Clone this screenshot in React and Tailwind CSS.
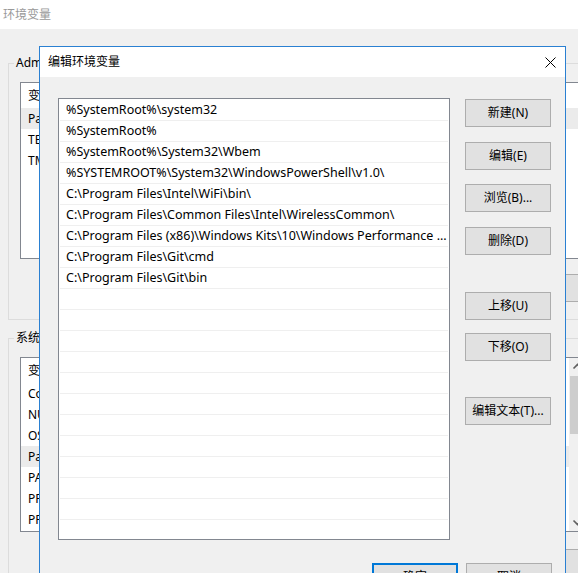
import React from "react";

const pathEntries = [
  "%SystemRoot%\\system32",
  "%SystemRoot%",
  "%SystemRoot%\\System32\\Wbem",
  "%SYSTEMROOT%\\System32\\WindowsPowerShell\\v1.0\\",
  "C:\\Program Files\\Intel\\WiFi\\bin\\",
  "C:\\Program Files\\Common Files\\Intel\\WirelessCommon\\",
  "C:\\Program Files (x86)\\Windows Kits\\10\\Windows Performance ...",
  "C:\\Program Files\\Git\\cmd",
  "C:\\Program Files\\Git\\bin",
];

const userVars = [
  ["Path", "%USERPROFILE%\\AppData\\Local\\Microsoft\\WindowsApps;", true],
  ["TEMP", "%USERPROFILE%\\AppData\\Local\\Temp"],
  ["TMP", "%USERPROFILE%\\AppData\\Local\\Temp"],
];

const systemVars = [
  ["ComSpec", "%SystemRoot%\\system32\\cmd.exe"],
  ["NUMBER_OF_PROCESSORS", "4"],
  ["OS", "Windows_NT"],
  ["Path", "%SystemRoot%\\system32;%SystemRoot%;", true],
  ["PATHEXT", ".COM;.EXE;.BAT;.CMD;.VBS;.JS;.MSC"],
  ["PROCESSOR_ARCHITECTURE", "AMD64"],
  ["PROCESSOR_IDENTIFIER", "Intel64 Family 6 Model 142"],
];

function WinButton({ children, primary = false, className = "" }) {
  return (
    <div
      className={
        "h-[28px] w-[86px] shrink-0 flex items-center justify-center bg-[#e1e1e1] leading-none whitespace-nowrap " +
        (primary ? "border-2 border-[#0078d7] " : "border border-[#adadad] ") +
        className
      }
    >
      {children}
    </div>
  );
}

function VarRows({ rows }) {
  return (
    <>
      <div className="h-[25px] flex items-center pl-[7px]">
        <span className="w-[180px] shrink-0">变量</span>
        <span>值</span>
      </div>
      {rows.map(([name, value, hl]) => (
        <div
          key={name}
          className={"h-[21px] flex items-center pl-[7px] " + (hl ? "bg-[#ebebeb]" : "")}
        >
          <span className="w-[180px] shrink-0 whitespace-nowrap">{name}</span>
          <span className="w-[300px] truncate">{value}</span>
        </div>
      ))}
    </>
  );
}

function Chevron({ up }) {
  return (
    <svg width="17" height="17" viewBox="0 0 17 17" className="shrink-0">
      <polyline
        points={up ? "4.5,10.5 8.5,6.5 12.5,10.5" : "4.5,6.5 8.5,10.5 12.5,6.5"}
        fill="none"
        stroke="#606060"
        strokeWidth="1.6"
      />
    </svg>
  );
}

export default function App() {
  return (
    <div className="relative w-[578px] h-[573px] overflow-hidden bg-[#f0f0f0] text-[12px] text-black font-['Noto_Sans','Noto_Sans_CJK_SC',sans-serif]">
      {/* Environment variables window behind the dialog */}
      <div className="w-[607px]">
        <div className="h-[29px] bg-white flex items-center pl-[3px] text-[#999999]">
          环境变量
        </div>
        <div className="px-[8px] pt-[26px]">
          <fieldset className="border border-[#dcdcdc] px-[11px] pt-[11px] pb-[17px]">
            <legend className="ml-[-6px] px-[2px] leading-[16px]">
              Administrator 的用户变量(U)
            </legend>
            <div className="h-[177px] border border-[#828790] bg-white overflow-hidden">
              <VarRows rows={userVars} />
            </div>
            <div className="mt-[15px] flex justify-end gap-[8px]">
              <WinButton>新建(N)...</WinButton>
              <WinButton>编辑(E)...</WinButton>
              <WinButton>删除(D)</WinButton>
            </div>
          </fieldset>

          <fieldset className="mt-[10px] border border-[#dcdcdc] px-[11px] pt-[11px] pb-[17px]">
            <legend className="ml-[-6px] px-[2px] leading-[16px]">系统变量(S)</legend>
            <div className="h-[175px] border border-[#828790] bg-white overflow-hidden flex">
              <div className="flex-1 min-w-0">
                <VarRows rows={systemVars} />
              </div>
              <div className="w-[17px] bg-[#f0f0f0] flex flex-col">
                <Chevron up />
                <div className="mt-[1px] h-[58px] mx-[1px] bg-[#cdcdcd]" />
                <div className="flex-1" />
                <Chevron />
              </div>
            </div>
            <div className="mt-[17px] flex justify-end gap-[8px]">
              <WinButton>新建(W)...</WinButton>
              <WinButton>编辑(I)...</WinButton>
              <WinButton>删除(L)</WinButton>
            </div>
          </fieldset>
        </div>
      </div>

      {/* Edit environment variable dialog */}
      <div className="absolute left-[39px] top-[46px] w-[527px] h-[560px] border border-[#2a80d2] bg-[#f0f0f0]">
        <div className="h-[30px] bg-white flex items-center justify-between pl-[8px] pr-[9px]">
          <span>编辑环境变量</span>
          <svg width="11" height="11" viewBox="0 0 11 11">
            <path d="M0.5 0.5 L10.5 10.5 M10.5 0.5 L0.5 10.5" stroke="#000" strokeWidth="1" />
          </svg>
        </div>

        <div className="flex pl-[18px] pt-[21px]">
          <div className="w-[392px] h-[442px] shrink-0 border border-[#828790] bg-white px-[1px] pt-[1px] overflow-hidden text-[12.5px]">
            {Array.from({ length: 21 }).map((_, i) => (
              <div
                key={i}
                className="h-[21px] border-b border-[#efefef] pl-[6px] leading-[20px] whitespace-nowrap overflow-hidden text-ellipsis"
              >
                {pathEntries[i] ?? ""}
              </div>
            ))}
          </div>

          <div className="ml-[15px] flex flex-col pt-[1px]">
            <WinButton>新建(N)</WinButton>
            <WinButton className="mt-[15px]">编辑(E)</WinButton>
            <WinButton className="mt-[14px]">浏览(B)...</WinButton>
            <WinButton className="mt-[15px]">删除(D)</WinButton>
            <WinButton className="mt-[37px]">上移(U)</WinButton>
            <WinButton className="mt-[13px]">下移(O)</WinButton>
            <WinButton className="mt-[36px]">编辑文本(T)...</WinButton>
          </div>
        </div>

        <div className="mt-[23px] flex justify-end gap-[8px] pr-[13px]">
          <WinButton primary>确定</WinButton>
          <WinButton>取消</WinButton>
        </div>
      </div>
    </div>
  );
}
